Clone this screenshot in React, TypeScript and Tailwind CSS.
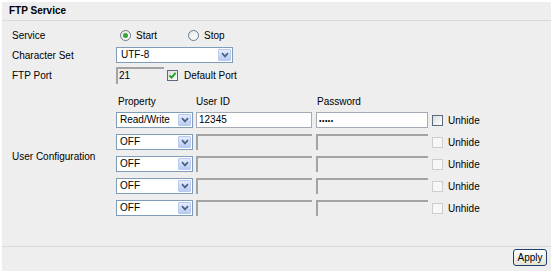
import { FC } from 'react'

const Chevron: FC = () => (
 <svg width="8" height="6" viewBox="0 0 8 6">
  <path d="M1 1.2 L4 4.4 L7 1.2" fill="none" stroke="#4d6185" strokeWidth="1.7" />
 </svg>
)

const Select: FC<{ value: string; className: string }> = ({ value, className }) => (
 <div className={`flex h-[16px] items-center border border-[#7f9db9] bg-white ${className}`}>
  <span className="flex-1 pl-[3px] leading-none">{value}</span>
  <span className="mr-px flex h-[12px] w-[13px] items-center justify-center rounded-[1px] border border-[#b8c9ee] bg-gradient-to-b from-[#e4ecfe] to-[#b9cbf3]">
   <Chevron />
  </span>
 </div>
)

const Radio: FC<{ checked?: boolean }> = ({ checked }) => (
 <span className="flex h-[11px] w-[11px] items-center justify-center rounded-full border border-[#6b7b8b] bg-gradient-to-br from-[#e6e6e6] to-white">
  {checked && <span className="h-[5px] w-[5px] rounded-full bg-[#34a534]" />}
 </span>
)

const Check: FC<{ checked?: boolean; disabled?: boolean }> = ({ checked, disabled }) => (
 <span
  className={
   disabled
    ? 'flex h-[11px] w-[11px] items-center justify-center border border-[#cdcdcd] bg-[#f7f7f7]'
    : 'flex h-[11px] w-[11px] items-center justify-center border border-[#5b6b7d] bg-gradient-to-br from-[#dcdcdc] to-white'
  }>
  {checked && (
   <svg width="9" height="9" viewBox="0 0 9 9">
    <path d="M1.5 4.5 L3.6 6.6 L7.6 1.8" fill="none" stroke="#21a121" strokeWidth="1.8" />
   </svg>
  )}
 </span>
)

const Sunken: FC<{ className: string; children?: React.ReactNode }> = ({ className, children }) => (
 <div className={`border-t-2 border-l-2 border-t-[#a3a3a3] border-l-[#a3a3a3] leading-none ${className}`}>
  {children}
 </div>
)

const users = [
 { prop: 'Read/Write', id: '12345', pw: '•••••', on: true },
 { prop: 'OFF', id: '', pw: '', on: false },
 { prop: 'OFF', id: '', pw: '', on: false },
 { prop: 'OFF', id: '', pw: '', on: false },
 { prop: 'OFF', id: '', pw: '', on: false },
]

const App: FC = () => {
 return (
  <div className="h-[274px] w-[553px] bg-white px-[2px] pt-[2px] font-['Liberation_Sans',Arial,sans-serif] text-[10px] text-black">
   <div className="flex h-[269px] flex-col bg-[#eeeeee]">
    <div className="h-[19px] border-b border-[#d9d9d9] pl-[7px] text-[10px] font-bold leading-[18px]">
     FTP Service
    </div>

    <div className="pt-[4px] pl-[10px]">
     <div className="flex h-[20px] items-center">
      <span className="w-[104px]">Service</span>
      <div className="ml-[4px] flex w-[68px] items-center gap-[5px]">
       <Radio checked />
       <span>Start</span>
      </div>
      <div className="flex items-center gap-[5px]">
       <Radio />
       <span>Stop</span>
      </div>
     </div>

     <div className="flex h-[20px] items-center">
      <span className="w-[104px]">Character Set</span>
      <Select value="UTF-8" className="w-[117px] pl-px" />
     </div>

     <div className="flex h-[20px] items-center">
      <span className="w-[104px]">FTP Port</span>
      <Sunken className="flex h-[17px] w-[48px] items-center pl-px">21</Sunken>
      <span className="ml-[3px]">
       <Check checked />
      </span>
      <span className="ml-[6px]">Default Port</span>
     </div>

     <div className="mt-[8px] flex">
      <div className="flex h-[126px] w-[104px] items-center">User Configuration</div>
      <div className="flex flex-col">
       <div className="flex h-[16px] items-center">
        <span className="w-[80px] pl-[2px]">Property</span>
        <span className="w-[120px]">User ID</span>
        <span className="pl-px">Password</span>
       </div>
       {users.map((u, i) => (
        <div key={i} className="flex h-[22px] items-center">
         <Select value={u.prop} className="w-[77px]" />
         {u.on ? (
          <>
           <div className="ml-[3px] flex h-[16px] w-[116px] items-center border border-[#a5acb5] bg-white pl-[2px] leading-none">
            {u.id}
           </div>
           <div className="ml-[4px] flex h-[16px] w-[112px] items-center border border-[#a5acb5] bg-white pl-[2px] text-[7px] leading-none tracking-[0.5px]">
            {u.pw}
           </div>
          </>
         ) : (
          <>
           <Sunken className="ml-[3px] h-[16px] w-[116px]" />
           <Sunken className="ml-[4px] h-[16px] w-[112px]" />
          </>
         )}
         <span className="ml-[4px]">
          <Check disabled={!u.on} />
         </span>
         <span className="ml-[5px]">Unhide</span>
        </div>
       ))}
      </div>
     </div>
    </div>

    <div className="mt-auto flex h-[25px] justify-end border-t border-[#d9d9d9] pt-[2px] pr-[4px]">
     <button className="h-[17px] w-[34px] rounded-[3px] border border-[#1d3f6e] bg-gradient-to-b from-white to-[#e6e3d6] text-[10px] leading-none">
      Apply
     </button>
    </div>
   </div>
  </div>
 )
}

export default App
